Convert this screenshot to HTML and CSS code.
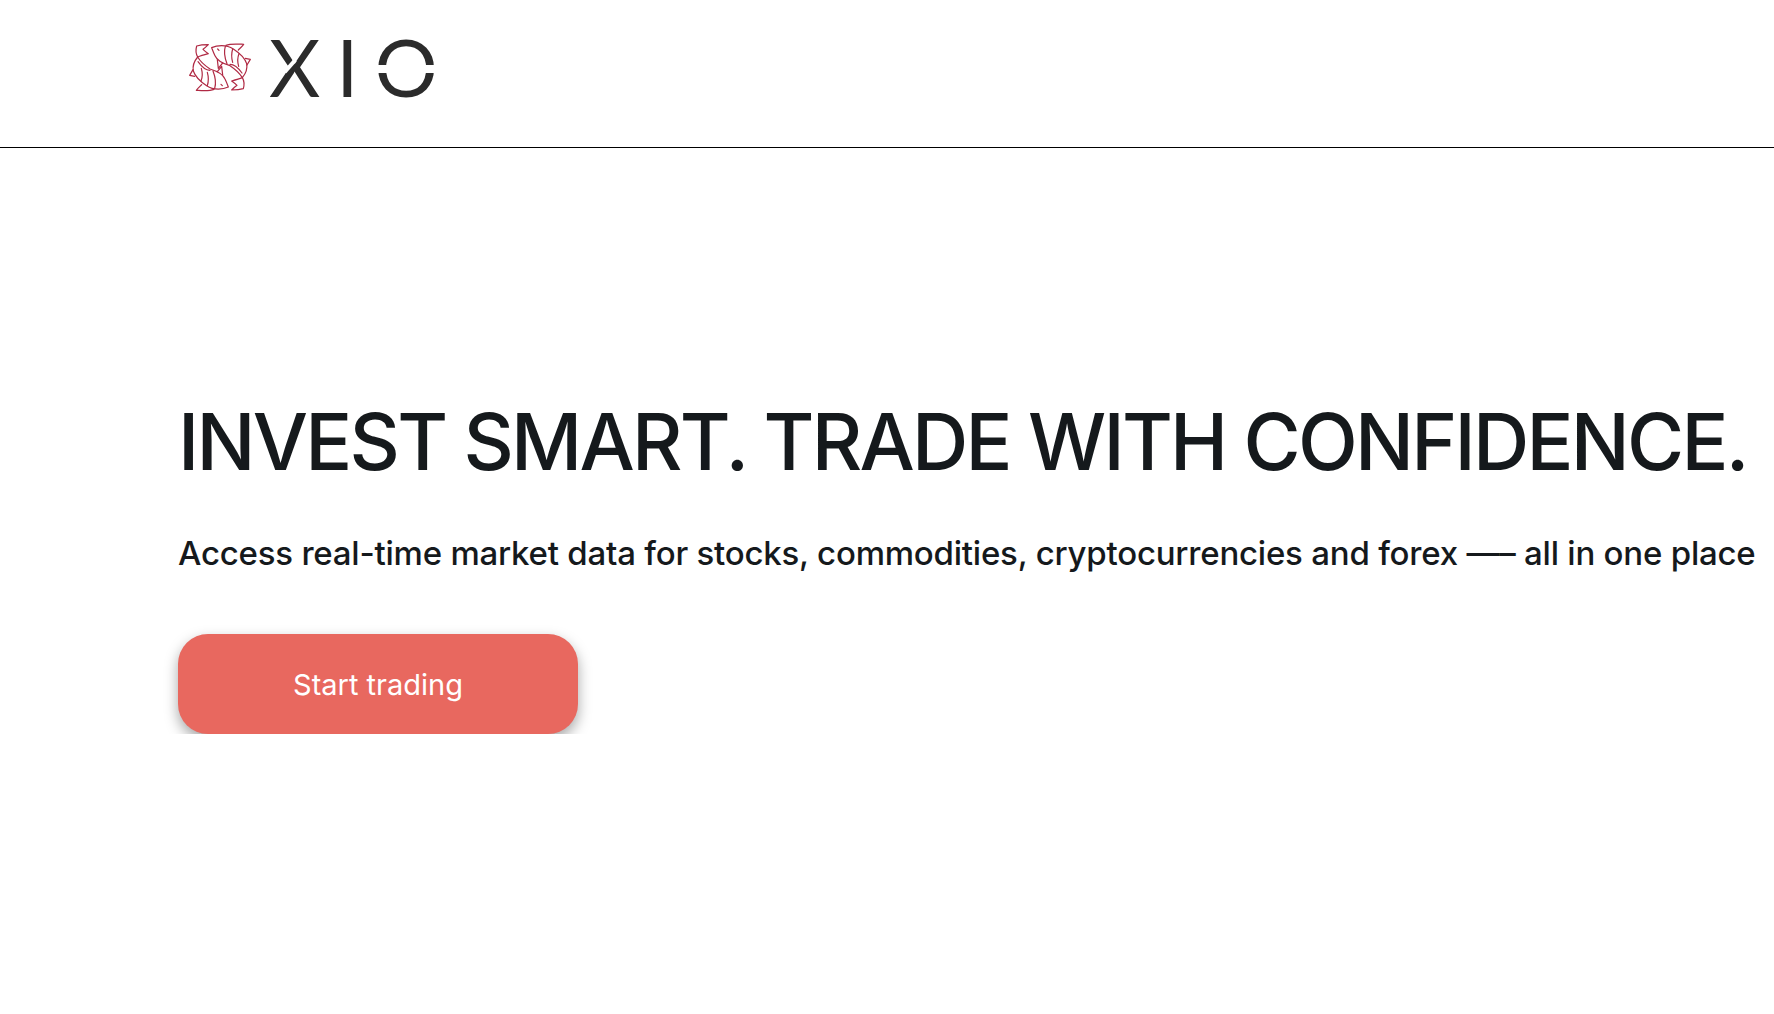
FILE: index.html
```html
<!DOCTYPE html>
<html>
<head>
    <title>XIO</title>
    <link rel="stylesheet" href="styles.css">
</head>
<body>
    <header class="site-header">
        <a class="logo" href="#">
            <svg class="logo-fish" viewBox="0 0 240 195" width="80" height="65" fill="none" stroke="#b02a44" stroke-width="3.6" stroke-linejoin="round" stroke-linecap="round">
                <g id="fish">
                    <path d="M95 38C110 31 138 27 160 42C180 55 194 68 200 86C203 102 197 116 187 128C180 116 168 104 150 92C130 86 112 78 105 62C101 54 98 46 95 38Z"/>
                    <path d="M138 31C152 25 172 27 191 28C187 34 181 39 175 45"/>
                    <path d="M196 70L211 73L201 90"/>
                    <path d="M112 74L115 100L128 84"/>
                    <path d="M187 128C177 132 166 135 155 138C162 143 167 147 171 151C164 156 160 160 155 165C167 165 180 164 190 161C193 150 193 138 187 128Z"/>
                    <path d="M150 88C162 88 176 100 186 114"/>
                    <path d="M136 34C131 50 134 68 141 86M158 42C154 55 154 68 158 82M177 56C172 68 172 80 176 94"/>
                    <path d="M113 42L117 46"/>
                </g>
                <use href="#fish" transform="rotate(180 120 97)"/>
            </svg>
            <span class="logo-word">
                <span class="logo-x">X</span>
                <span class="logo-i">I</span>
                <span class="logo-o">O</span>
            </span>
        </a>
    </header>

    <main class="hero">
        <h1>INVEST SMART. TRADE WITH CONFIDENCE.</h1>
        <p>Access real-time market data for stocks, commodities, cryptocurrencies and forex —– all in one place</p>
        <a class="btn-start" href="#">Start trading</a>
    </main>
</body>
</html>
```

FILE: styles.css
```css
body {
    margin: 0;
    font-family: Inter, "Open Sans", sans-serif;
    color: #15191c;
    background-color: #fff;
}
a {
    text-decoration: none;
}
.site-header {
    height: 148px;
    border-bottom: 1px solid #000;
    padding: 34px 0 0 180px;
    box-sizing: border-box;
}
.logo {
    display: flex;
    align-items: flex-start;
}
.logo-fish {
    margin-top: 1px;
}
.logo-word {
    display: flex;
    margin-left: 9px;
    color: #2b2b2b;
    font-family: Lato, sans-serif;
    font-size: 79px;
    line-height: 66px;
    font-weight: 400;
    gap: 16px;
}
.logo-x,
.logo-o {
    position: relative;
}
.logo-o::after {
    content: "";
    position: absolute;
    left: -2px;
    right: -2px;
    top: 31px;
    height: 8px;
    background-color: #fff;
}
.logo-x::after {
    content: "";
    position: absolute;
    left: 13px;
    top: 30px;
    width: 16px;
    height: 4px;
    background-color: #fff;
    transform: rotate(-49deg);
}
.hero {
    padding: 0 0 0 178px;
}
.hero h1 {
    margin: 246px 0 0;
    font-size: 78px;
    line-height: 96px;
    font-weight: 500;
    letter-spacing: -2.75px;
    white-space: nowrap;
}
.hero p {
    margin: 41px 0 0;
    font-size: 33px;
    line-height: 44px;
    font-weight: 500;
    letter-spacing: -0.22px;
    white-space: nowrap;
}
.btn-start {
    display: flex;
    align-items: center;
    justify-content: center;
    width: 400px;
    height: 100px;
    margin-top: 59px;
    border-radius: 30px;
    background-color: #e8685f;
    color: #fff;
    font-size: 29px;
    box-shadow: 0 6px 14px rgba(0, 0, 0, 0.35);
}
```
